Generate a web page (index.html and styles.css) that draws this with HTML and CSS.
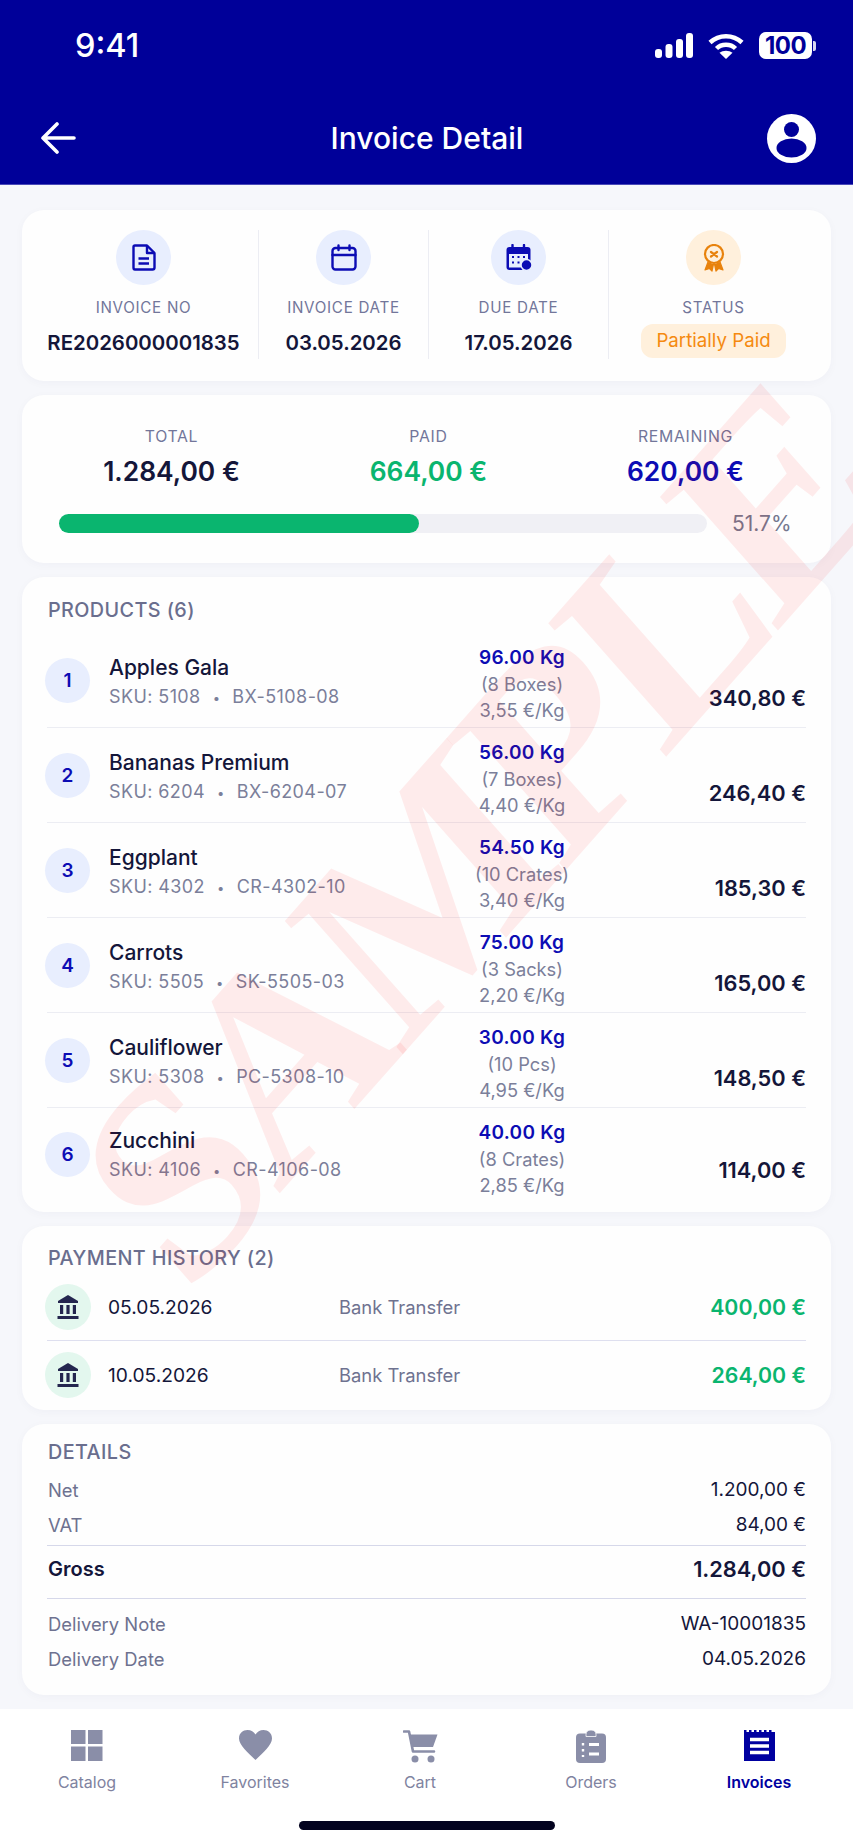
FILE: index.html
```html
<!DOCTYPE html>
<html lang="en">
<head>
    <meta charset="UTF-8">
    <meta name="viewport" content="width=device-width, initial-scale=1.0">
    <title>Invoice Detail</title>
    <link rel="stylesheet" href="styles.css">
</head>
<body>
    <header class="app-header">
        <div class="status-bar">
            <span class="status-time">9:41</span>
            <div class="status-icons">
                <svg width="38" height="25" viewBox="0 0 38 25" fill="#fff">
                    <rect x="0" y="16" width="7" height="9" rx="3"/>
                    <rect x="10.500" y="11" width="7" height="14" rx="3"/>
                    <rect x="21" y="6" width="7" height="19" rx="3"/>
                    <rect x="31" y="0" width="7" height="25" rx="3"/>
                </svg>
                <svg width="36" height="26" viewBox="0 0 36 26" fill="none" stroke="#fff" stroke-width="4.500">
                    <path d="M2 9.500 C11 1 25 1 34 9.500"/>
                    <path d="M8.500 15.500 C13.500 10.500 22.500 10.500 27.500 15.500"/>
                    <path d="M18 26 L11.500 19.800 C15 17 21 17 24.500 19.800 Z" fill="#fff" stroke="none"/>
                </svg>
                <div class="battery">
                    <span class="battery-body">100</span>
                    <span class="battery-tip"></span>
                </div>
            </div>
        </div>
        <div class="nav-bar">
            <svg width="36" height="32" viewBox="0 0 36 32" fill="none" stroke="#fff" stroke-width="3.600" stroke-linecap="round" stroke-linejoin="round">
                <path d="M34 16 H3 M17 2 L3 16 L17 30"/>
            </svg>
            <h1 class="nav-title">Invoice Detail</h1>
            <svg width="49" height="49" viewBox="0 0 49 49">
                <circle cx="24.500" cy="24.500" r="24.500" fill="#fff"/>
                <circle cx="24.500" cy="15.500" r="7.500" fill="#000099"/>
                <ellipse cx="24.500" cy="34" rx="15" ry="9.500" fill="#000099"/>
            </svg>
        </div>
    </header>

    <main class="content">
        <section class="card info-card">
            <div class="info-col">
                <div class="info-icon">
                    <svg width="24" height="27" viewBox="0 0 24 27" fill="none" stroke="#0c0cb4" stroke-width="2.400" stroke-linejoin="round">
                        <path d="M3 1.500 H15 L22.500 9 V23.500 Q22.500 25.500 20.500 25.500 H3 Q1.500 25.500 1.500 23.500 V3 Q1.500 1.500 3 1.500 Z"/>
                        <path d="M15 1.500 V9 H22.500"/>
                        <path d="M6.500 14.500 H17 M6.500 19.500 H17"/>
                    </svg>
                </div>
                <p class="info-label">INVOICE NO</p>
                <p class="info-value">RE2026000001835</p>
            </div>
            <div class="info-col">
                <div class="info-icon">
                    <svg width="26" height="27" viewBox="0 0 26 27" fill="none" stroke="#0c0cb4" stroke-width="2.400" stroke-linecap="round">
                        <rect x="1.500" y="4" width="23" height="21.500" rx="3"/>
                        <path d="M1.500 11 H24.500 M7.500 1.500 V6 M18.500 1.500 V6"/>
                    </svg>
                </div>
                <p class="info-label">INVOICE DATE</p>
                <p class="info-value">03.05.2026</p>
            </div>
            <div class="info-col">
                <div class="info-icon">
                    <svg width="26" height="27" viewBox="0 0 26 27">
                        <rect x="0.500" y="3" width="24" height="23" rx="3" fill="#0c0cb4"/>
                        <rect x="3" y="10" width="19" height="13.500" fill="#e8eefe"/>
                        <path d="M6.500 1 V6 M18 1 V6" stroke="#0c0cb4" stroke-width="2.400" stroke-linecap="round"/>
                        <path d="M6 13 h2 M11.500 13 h2 M17 13 h2 M6 18.500 h2 M11.500 18.500 h2" stroke="#0c0cb4" stroke-width="2"/>
                        <circle cx="20.500" cy="21" r="5.500" fill="#0c0cb4" stroke="#e8eefe" stroke-width="1.500"/>
                    </svg>
                </div>
                <p class="info-label">DUE DATE</p>
                <p class="info-value">17.05.2026</p>
            </div>
            <div class="info-col">
                <div class="info-icon info-icon-orange">
                    <svg width="22" height="28" viewBox="0 0 22 28" fill="none" stroke="#e8820c" stroke-width="2.200" stroke-linecap="round">
                        <circle cx="11" cy="10" r="9"/>
                        <path d="M8 8 L14 12.500 M14 8 L8 12.500"/>
                        <path d="M5 18 L2 26 L6.500 24.500 L9 27 L10.500 20 M17 18 L20 26 L15.500 24.500 L13 27 L11.500 20" fill="#e8820c" stroke-width="1.200" stroke-linejoin="round"/>
                    </svg>
                </div>
                <p class="info-label">STATUS</p>
                <span class="status-badge">Partially Paid</span>
            </div>
        </section>

        <section class="card summary-card">
            <div class="summary-row">
                <div class="summary-col">
                    <p class="summary-label">TOTAL</p>
                    <p class="summary-value">1.284,00 €</p>
                </div>
                <div class="summary-col">
                    <p class="summary-label">PAID</p>
                    <p class="summary-value text-green">664,00 €</p>
                </div>
                <div class="summary-col">
                    <p class="summary-label">REMAINING</p>
                    <p class="summary-value text-blue">620,00 €</p>
                </div>
            </div>
            <div class="progress-row">
                <div class="progress-track">
                    <div class="progress-fill" style="width: 55.6%"></div>
                </div>
                <span class="progress-text">51.7%</span>
            </div>
        </section>

        <section class="card products-card">
            <h2 class="card-title products-title">PRODUCTS (6)</h2>
            <div class="product-row">
                <div class="row-number">1</div>
                <div class="product-main">
                    <p class="product-name">Apples Gala</p>
                    <p class="product-sku">SKU: 5108<span class="sku-dot">•</span>BX-5108-08</p>
                </div>
                <div class="product-qty">
                    <p class="qty-main">96.00 Kg</p>
                    <p class="qty-sub">(8 Boxes)</p>
                    <p class="qty-sub">3,55 €/Kg</p>
                </div>
                <p class="product-price">340,80 €</p>
            </div>
            <div class="product-row">
                <div class="row-number">2</div>
                <div class="product-main">
                    <p class="product-name">Bananas Premium</p>
                    <p class="product-sku">SKU: 6204<span class="sku-dot">•</span>BX-6204-07</p>
                </div>
                <div class="product-qty">
                    <p class="qty-main">56.00 Kg</p>
                    <p class="qty-sub">(7 Boxes)</p>
                    <p class="qty-sub">4,40 €/Kg</p>
                </div>
                <p class="product-price">246,40 €</p>
            </div>
            <div class="product-row">
                <div class="row-number">3</div>
                <div class="product-main">
                    <p class="product-name">Eggplant</p>
                    <p class="product-sku">SKU: 4302<span class="sku-dot">•</span>CR-4302-10</p>
                </div>
                <div class="product-qty">
                    <p class="qty-main">54.50 Kg</p>
                    <p class="qty-sub">(10 Crates)</p>
                    <p class="qty-sub">3,40 €/Kg</p>
                </div>
                <p class="product-price">185,30 €</p>
            </div>
            <div class="product-row">
                <div class="row-number">4</div>
                <div class="product-main">
                    <p class="product-name">Carrots</p>
                    <p class="product-sku">SKU: 5505<span class="sku-dot">•</span>SK-5505-03</p>
                </div>
                <div class="product-qty">
                    <p class="qty-main">75.00 Kg</p>
                    <p class="qty-sub">(3 Sacks)</p>
                    <p class="qty-sub">2,20 €/Kg</p>
                </div>
                <p class="product-price">165,00 €</p>
            </div>
            <div class="product-row">
                <div class="row-number">5</div>
                <div class="product-main">
                    <p class="product-name">Cauliflower</p>
                    <p class="product-sku">SKU: 5308<span class="sku-dot">•</span>PC-5308-10</p>
                </div>
                <div class="product-qty">
                    <p class="qty-main">30.00 Kg</p>
                    <p class="qty-sub">(10 Pcs)</p>
                    <p class="qty-sub">4,95 €/Kg</p>
                </div>
                <p class="product-price">148,50 €</p>
            </div>
            <div class="product-row last-row">
                <div class="row-number">6</div>
                <div class="product-main">
                    <p class="product-name">Zucchini</p>
                    <p class="product-sku">SKU: 4106<span class="sku-dot">•</span>CR-4106-08</p>
                </div>
                <div class="product-qty">
                    <p class="qty-main">40.00 Kg</p>
                    <p class="qty-sub">(8 Crates)</p>
                    <p class="qty-sub">2,85 €/Kg</p>
                </div>
                <p class="product-price">114,00 €</p>
            </div>
        </section>

        <section class="card payments-card">
            <h2 class="card-title payments-title">PAYMENT HISTORY (2)</h2>
            <div class="payment-row">
                <div class="bank-icon">
                    <svg width="22" height="24" viewBox="0 0 22 24" fill="#24264f">
                        <path d="M11 0 L21 6 V8 H1 V6 Z"/>
                        <rect x="3" y="10" width="3.200" height="9"/>
                        <rect x="9.400" y="10" width="3.200" height="9"/>
                        <rect x="15.800" y="10" width="3.200" height="9"/>
                        <rect x="0.500" y="21" width="21" height="3"/>
                    </svg>
                </div>
                <p class="payment-date">05.05.2026</p>
                <p class="payment-method">Bank Transfer</p>
                <p class="payment-amount">400,00 €</p>
            </div>
            <div class="payment-row">
                <div class="bank-icon">
                    <svg width="22" height="24" viewBox="0 0 22 24" fill="#24264f">
                        <path d="M11 0 L21 6 V8 H1 V6 Z"/>
                        <rect x="3" y="10" width="3.200" height="9"/>
                        <rect x="9.400" y="10" width="3.200" height="9"/>
                        <rect x="15.800" y="10" width="3.200" height="9"/>
                        <rect x="0.500" y="21" width="21" height="3"/>
                    </svg>
                </div>
                <p class="payment-date">10.05.2026</p>
                <p class="payment-method">Bank Transfer</p>
                <p class="payment-amount">264,00 €</p>
            </div>
        </section>

        <section class="card details-card">
            <h2 class="card-title details-title">DETAILS</h2>
            <div class="detail-row">
                <span class="detail-label">Net</span>
                <span class="detail-value">1.200,00 €</span>
            </div>
            <div class="detail-row">
                <span class="detail-label">VAT</span>
                <span class="detail-value">84,00 €</span>
            </div>
            <div class="detail-row detail-gross">
                <span>Gross</span>
                <span class="gross-value">1.284,00 €</span>
            </div>
            <div class="detail-row">
                <span class="detail-label">Delivery Note</span>
                <span class="detail-value">WA-10001835</span>
            </div>
            <div class="detail-row">
                <span class="detail-label">Delivery Date</span>
                <span class="detail-value">04.05.2026</span>
            </div>
        </section>

        <div class="watermark">SAMPLE</div>
    </main>

    <nav class="tab-bar">
        <div class="tab-item">
            <svg width="32" height="31" viewBox="0 0 32 31" fill="#8a8ea8">
                <rect x="0" y="0" width="14.500" height="14"/>
                <rect x="17" y="0" width="14.500" height="14"/>
                <rect x="0" y="16.500" width="14.500" height="14.500"/>
                <rect x="17" y="16.500" width="14.500" height="14.500"/>
            </svg>
            <span>Catalog</span>
        </div>
        <div class="tab-item">
            <svg width="33" height="31" viewBox="0 0 33 31" fill="#8a8ea8">
                <path d="M16.500 30 C9 23 0 15 0 8.500 C0 3 4 0 8.500 0 C12 0 15 1.800 16.500 4.500 C18 1.800 21 0 24.500 0 C29 0 33 3 33 8.500 C33 15 24 23 16.500 30 Z"/>
            </svg>
            <span>Favorites</span>
        </div>
        <div class="tab-item tab-cart">
            <svg width="35" height="33" viewBox="0 0 35 33" fill="none" stroke="#8a8ea8">
                <path d="M1 1.500 H6 L10 21.500 H31" stroke-width="2.600" stroke-linecap="round" stroke-linejoin="round"/>
                <path d="M6.500 4.500 H34.500 L30 17 H9 Z" fill="#8a8ea8" stroke="none"/>
                <circle cx="12" cy="29" r="3.500" fill="#8a8ea8" stroke="none"/>
                <circle cx="28" cy="29" r="3.500" fill="#8a8ea8" stroke="none"/>
            </svg>
            <span>Cart</span>
        </div>
        <div class="tab-item">
            <svg width="30" height="33" viewBox="0 0 30 33">
                <rect x="0" y="3.500" width="30" height="29.500" rx="4" fill="#8a8ea8"/>
                <path d="M10 4.500 Q10 0 15 0 Q20 0 20 4.500 V6.500 H10 Z" fill="#8a8ea8" stroke="#fff" stroke-width="0.800"/>
                <path d="M7 13 V15.500 M7 19 V21.500 M7 25 V27" stroke="#fff" stroke-width="2.400"/>
                <path d="M13 14.500 H23 M13 24 H23" stroke="#fff" stroke-width="3"/>
            </svg>
            <span>Orders</span>
        </div>
        <div class="tab-item tab-active">
            <svg width="31" height="31" viewBox="0 0 31 31">
                <path d="M0 0 H2.500 V2 H5 V0 H7.500 V2 H10 V0 H12.500 V2 H15 V0 H17.500 V2 H20 V0 H22.500 V2 H25 V0 H27.500 V2 H31 V31 H0 Z" fill="#0000a0"/>
                <path d="M6 9.500 H25 M6 16 H25 M6 22.500 H25" stroke="#fff" stroke-width="3.400"/>
            </svg>
            <span>Invoices</span>
        </div>
        <div class="home-indicator"></div>
    </nav>
</body>
</html>
```

FILE: styles.css
```css
* {
    box-sizing: border-box;
}

p, h1, h2 {
    margin: 0;
    font-weight: inherit;
}

body {
    margin: 0;
    width: 853px;
    height: 1844px;
    overflow: hidden;
    display: flex;
    flex-direction: column;
    font-family: Inter, "Liberation Sans", sans-serif;
    color: #14163a;
    background-color: #f6f7fb;
}

/* header */
.app-header {
    height: 185px;
    flex-shrink: 0;
    background-color: #000099;
    border-bottom: 1px solid #4a4ab8;
    color: #fff;
    position: relative;
    z-index: 2;
}

.status-bar {
    height: 92px;
    padding: 31px 37px 0 75px;
    display: flex;
    justify-content: space-between;
    align-items: flex-start;
}

.status-time {
    font-size: 32.500px;
    line-height: 30px;
    font-weight: 500;
}

.status-icons {
    display: flex;
    align-items: center;
    gap: 15px;
    padding-top: 1px;
}

.battery {
    display: flex;
    align-items: center;
    gap: 1px;
}

.battery-body {
    width: 53px;
    height: 27px;
    border-radius: 7px;
    background-color: #fff;
    color: #000099;
    font-size: 24px;
    line-height: 27px;
    font-weight: 700;
    letter-spacing: -0.5px;
    text-align: center;
}

.battery-tip {
    width: 3px;
    height: 10px;
    border-radius: 0 2px 2px 0;
    background-color: #d8d8f0;
}

.nav-bar {
    height: 92px;
    padding: 0 37px 0 40px;
    display: flex;
    justify-content: space-between;
    align-items: center;
}

.nav-title {
    font-size: 30px;
    font-weight: 500;
    margin-left: 11px;
}

/* cards */
.content {
    flex: 1;
    position: relative;
    padding: 25px 22px 14px;
    display: flex;
    flex-direction: column;
    gap: 14px;
    overflow: hidden;
}

.card {
    background-color: #fefefe;
    border-radius: 22px;
    box-shadow: 0 2px 10px rgba(30, 40, 90, 0.03);
}

.card-title {
    padding-left: 1px;
    font-size: 19.800px;
    line-height: 24px;
    letter-spacing: 0.4px;
    font-weight: 500;
    color: #6a6e8e;
}

.products-title {
    margin-bottom: 11px;
}

.payments-title {
    margin-bottom: 3px;
}

.details-title {
    margin-bottom: 8px;
}

.text-green {
    color: #0ab56f;
}

.text-blue {
    color: #0c0cb4;
}

/* invoice info */
.info-card {
    height: 171px;
    padding: 20px 12px 0 7px;
    display: grid;
    grid-template-columns: 230px 170px 180px 209px;
}

.info-col {
    height: 129px;
    display: flex;
    flex-direction: column;
    align-items: center;
    border-right: 1px solid #ecedf3;
}

.info-col:last-child {
    border-right: 0;
}

.info-icon {
    width: 55px;
    height: 55px;
    border-radius: 50%;
    background-color: #e8eefe;
    display: flex;
    align-items: center;
    justify-content: center;
}

.info-icon-orange {
    background-color: #fff0dc;
}

.info-label {
    margin-top: 14px;
    font-size: 15.200px;
    line-height: 18px;
    letter-spacing: 0.7px;
    color: #72769a;
}

.info-value {
    margin-top: 13px;
    font-size: 20.400px;
    line-height: 26px;
    font-weight: 600;
}

.status-badge {
    margin-top: 7px;
    width: 145px;
    height: 34px;
    border-radius: 12px;
    background-color: #fff0dc;
    color: #f58a10;
    font-size: 18.700px;
    line-height: 34px;
    text-align: center;
}

/* totals */
.summary-card {
    height: 168px;
    padding: 32px 10px 0 21px;
}

.summary-row {
    display: grid;
    grid-template-columns: repeat(3, 257px);
    text-align: center;
}

.summary-label {
    font-size: 15.800px;
    line-height: 20px;
    letter-spacing: 0.7px;
    color: #72769a;
}

.summary-value {
    margin-top: 8px;
    font-size: 26.400px;
    line-height: 32px;
    font-weight: 600;
}

.progress-row {
    margin-top: 24px;
    margin-left: 16px;
    display: flex;
    align-items: center;
}

.progress-track {
    width: 648px;
    height: 19px;
    border-radius: 10px;
    background-color: #f0f0f5;
}

.progress-fill {
    height: 100%;
    border-radius: 10px;
    background-color: #0ab56f;
}

.progress-text {
    margin-left: 25px;
    font-size: 21px;
    color: #74788f;
}

/* products */
.products-card {
    height: 635px;
    padding: 21px 25px 0;
}

.product-row {
    height: 95px;
    padding: 12px 0 5px;
    display: grid;
    grid-template-columns: 62px 351px 124px 1fr;
    align-items: center;
    border-bottom: 1px solid #ecedf3;
}

.last-row {
    height: 90px;
    padding: 11px 0 0;
    border-bottom: 0;
}

.row-number {
    width: 45px;
    height: 45px;
    margin-left: -2px;
    margin-bottom: 8px;
    border-radius: 50%;
    background-color: #e8eefe;
    color: #0c0cb4;
    font-size: 19px;
    line-height: 45px;
    font-weight: 600;
    text-align: center;
}

.product-main {
    margin-bottom: 3px;
}

.last-row .product-main {
    margin-bottom: 6px;
}

.product-name {
    font-size: 21px;
    line-height: 26px;
    font-weight: 500;
}

.product-sku {
    margin-top: 4px;
    font-size: 18px;
    line-height: 24px;
    letter-spacing: 0.4px;
    color: #7b7f9a;
}

.sku-dot {
    margin: 0 12px;
    font-size: 13px;
}

.product-qty {
    text-align: center;
    font-size: 18.300px;
    line-height: 26px;
    white-space: nowrap;
}

.qty-main {
    font-size: 19px;
    letter-spacing: 0.3px;
    font-weight: 600;
    color: #0c0cb4;
}

.qty-sub {
    color: #7b7f9a;
}

.product-price {
    align-self: end;
    margin-bottom: 13px;
    font-size: 21.800px;
    line-height: 24px;
    font-weight: 600;
    text-align: right;
}

.last-row .product-price {
    margin-bottom: 16px;
}

/* payments */
.payments-card {
    height: 184px;
    padding: 20px 25px 0;
}

.payment-row {
    height: 68px;
    display: grid;
    grid-template-columns: 61px 231px 1fr auto;
    align-items: center;
    border-bottom: 1px solid #dedfef;
}

.payment-row:last-child {
    border-bottom: 0;
}

.bank-icon {
    width: 46px;
    height: 46px;
    margin-left: -2px;
    border-radius: 50%;
    background-color: #e3f7ee;
    display: flex;
    align-items: center;
    justify-content: center;
}

.payment-date {
    font-size: 19.200px;
}

.payment-method {
    font-size: 18.400px;
    color: #6e7290;
}

.payment-amount {
    font-size: 21.300px;
    font-weight: 600;
    color: #0ab56f;
}

/* details */
.details-card {
    height: 271px;
    padding: 16px 25px 0;
}

.detail-row {
    height: 35px;
    display: flex;
    justify-content: space-between;
    align-items: center;
    font-size: 19px;
}

.detail-label {
    padding-left: 1px;
    font-size: 18.400px;
    color: #6e7290;
}

.detail-gross {
    height: 54px;
    margin-top: 3px;
    margin-bottom: 7px;
    padding: 0 0 6px 1px;
    border-top: 1px solid #d6d8ea;
    border-bottom: 1px solid #d6d8ea;
    font-size: 20px;
    font-weight: 600;
}

.gross-value {
    font-size: 21.800px;
}

/* watermark lies over the cards */
.watermark {
    position: absolute;
    left: 476px;
    top: 650px;
    transform: translate(-50%, -50%) scaleY(1.13) rotate(-45deg);
    font-family: "Liberation Serif", serif;
    font-size: 255px;
    font-weight: 700;
    letter-spacing: -12px;
    line-height: 1;
    white-space: nowrap;
    color: rgba(255, 0, 0, 0.075);
    pointer-events: none;
}

/* tab bar */
.tab-bar {
    height: 135px;
    flex-shrink: 0;
    position: relative;
    padding: 21px 10px 0 3px;
    display: grid;
    grid-template-columns: repeat(5, 1fr);
    background-color: #fff;
}

.tab-item {
    height: 62px;
    display: flex;
    flex-direction: column;
    align-items: center;
    justify-content: space-between;
    font-size: 16px;
    color: #7f83a0;
}

.tab-cart {
    position: relative;
    left: -3px;
}

.tab-active {
    color: #0000a0;
    font-weight: 600;
}

.home-indicator {
    position: absolute;
    left: 299px;
    bottom: 14px;
    width: 256px;
    height: 9px;
    border-radius: 5px;
    background-color: #03031f;
}
```
